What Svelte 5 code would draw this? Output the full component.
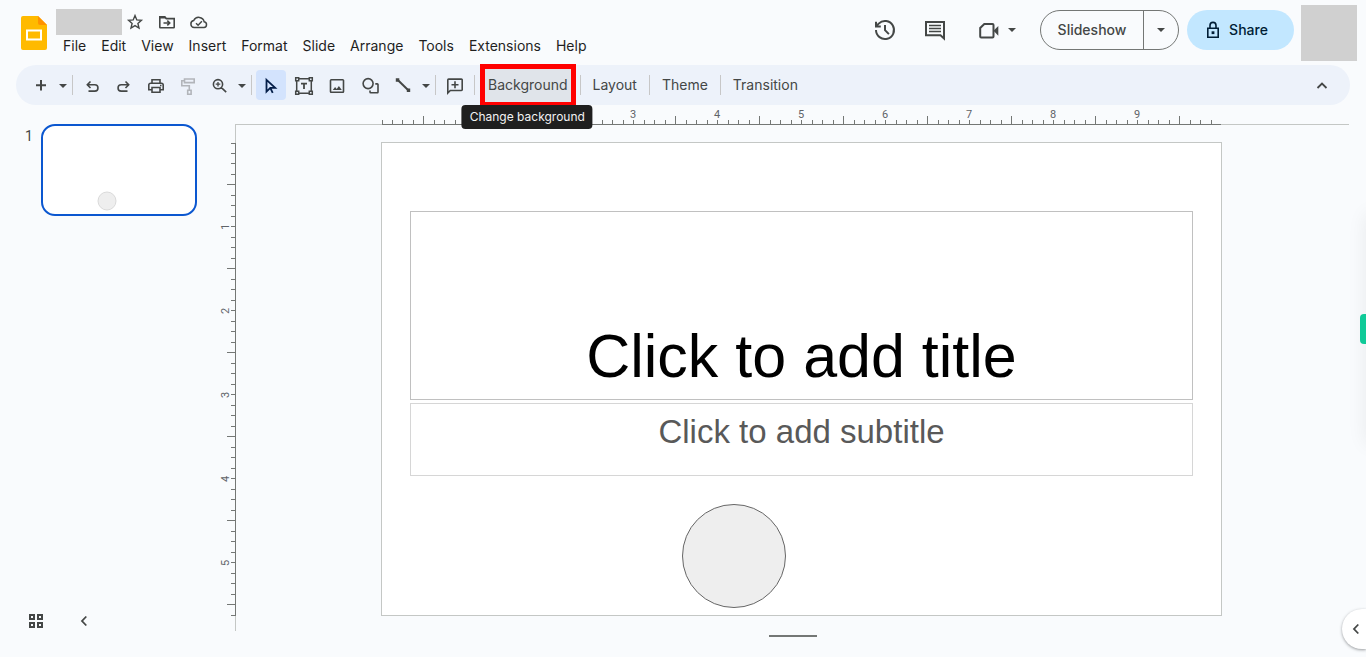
<script>
  const icons = {
    plus: [{ d: 'M10 5v10.500M5 10.300h10', w: 2 }],
    undo: [{ d: 'M8.500 6.500L5.300 9.800l3.200 3.200M5.500 9.800h7.300a3.100 3.100 0 0 1 0 6.300H6.500' }],
    redo: [{ d: 'M11.500 6.500l3.200 3.300-3.200 3.200M14.500 9.800H7.200a3.100 3.100 0 0 0 0 6.300h6.300' }],
    print: [
      { d: 'M6 8V4.800h8V8M5.500 14.800H2.800V10a1.800 1.800 0 0 1 1.800-1.800h10.800A1.800 1.800 0 0 1 17.200 10v4.800h-2.700M6 12.500h8v4.800H6z' },
      { d: 'M14 9.800h1.500v1.500H14z', fill: true }
    ],
    paint: [{ d: 'M6.500 4h9.700v3.600H6.500zM6.500 5.800H3.800v4.900h7.500V15M9.700 15.200h3.400v4H9.700z' }],
    zoom: [{ d: 'M12.600 9.200a4.600 4.600 0 1 1-9.200 0a4.600 4.600 0 1 1 9.200 0zM11.400 12.600l4.800 4.600' }, { d: 'M8 6.900v4.600M5.700 9.200h4.600', w: 1.3 }],
    cursor: [{ d: 'M5.500 4.800l8.700 8.100H9.300l-3.800 3.700zM9.300 12.900l2.400 5', w: 1.8 }],
    textbox: [
      { d: 'M5 3.700h10M5 18.300h10M2.700 6v10M17.300 6v10M1.700 2.700h3v3h-3zM15.300 2.700h3v3h-3zM1.700 16.300h3v3h-3zM15.300 16.300h3v3h-3z', w: 1.5 },
      { d: 'M7 8.600h6M10 8.600v5.400', w: 1.8 }
    ],
    image: [{ d: 'M4.300 4.800h11.400a.8.8 0 0 1 .8.800v10.900a.8.8 0 0 1-.8.800H4.300a.8.8 0 0 1-.8-.8V5.600a.8.8 0 0 1 .8-.8z' }, { d: 'M5.800 15l2.300-3 1.600 1.900 2.200-2.900 2.900 4z', fill: true }],
    shape: [{ d: 'M13.100 8.600a5 5 0 1 1-10 0a5 5 0 1 1 10 0zM15.300 8.900h2a.7.700 0 0 1 .7.700v7.500a.7.700 0 0 1-.7.700h-6.600a.7.700 0 0 1-.7-.7v-1.600' }],
    line: [{ d: 'M4.800 5L15.300 15.300', w: 2 }, { d: 'M2.800 3.300h3.500v3.400H2.800zM13.800 13.600h3.400V17h-3.400z', fill: true }],
    addComment: [{ d: 'M2.800 18V4.900a.8.8 0 0 1 .8-.8h12.800a.8.8 0 0 1 .8.800v9.800a.8.8 0 0 1-.8.800H5.300z' }, { d: 'M10 6.300v7M6.500 9.800h7' }],
    up: [{ d: 'M5.500 13l4.500-4.500 4.500 4.500', w: 1.8 }],
    left: [{ d: 'M12.300 5.500L8 10l4.300 4.500', w: 1.8 }],
    grid: [{ d: 'M4 4h4v4H4zM12 4h4v4h-4zM4 12h4v4H4zM12 12h4v4h-4z', w: 2 }],
    star: [{ d: 'M10 3.600l1.800 4.300 4.600.4-3.500 3.100 1.100 4.600L10 13.600 6 16l1.100-4.600-3.500-3.100 4.600-.4z', w: 1.4 }],
    folder: [{ d: 'M2.800 15.300V4.800h5l1.500 1.800h7.900v8.700a.5.500 0 0 1-.5.500H3.300a.5.500 0 0 1-.5-.5z' }, { d: 'M6.500 11h6M10.300 8.700l2.400 2.300-2.400 2.300' }, { d: 'M2.800 4.300h5l1.600 2.300H2.800z', fill: true }],
    cloud: [{ d: 'M5.200 15.600a3.600 3.600 0 0 1-.5-7.100a5.600 5.600 0 0 1 10.500 1.300a2.950 2.950 0 0 1-.2 5.800z', w: 1.5 }, { d: 'M7 11.200l2.100 2 3.800-3.900', w: 1.5 }],
    history: [{ d: 'M3 12a9 9 0 1 0 2.700-6.400L3 8.200M3 3.800v4.700h4.800M12 7v5.200l3.900 3.900', w: 2 }],
    comment: [{ d: 'M3 4h18v16.500L17.500 17.300H3z', w: 2 }, { d: 'M6 7.500h12M6 10.500h12M6 13.500h12', w: 1.7 }],
    camera: [{ d: 'M8.300 6h8.200a1 1 0 0 1 1 1v11.500a1 1 0 0 1-1 1H5.200a1 1 0 0 1-1-1v-8.500z', w: 2 }, { d: 'M17.500 12.800L22.300 8v9.800z', fill: true }],
    lock: [{ d: 'M4.800 8.300h10.400v8.900H4.800zM7 8V5.400a3 3 0 0 1 6 0V8' }, { d: 'M8.600 11.300h2.800v2.800H8.600z', fill: true }]
  };

  const menus = ['File', 'Edit', 'View', 'Insert', 'Format', 'Slide', 'Arrange', 'Tools', 'Extensions', 'Help'];
  const history = [['undo', 'Undo'], ['redo', 'Redo'], ['print', 'Print'], ['paint', 'Paint format'], ['zoom', 'Zoom']];
  const drawing = [['cursor', 'Select'], ['textbox', 'Text box'], ['image', 'Insert image'], ['shape', 'Shape'], ['line', 'Line']];

  const INCH = 84;
  const ticks = (length) =>
    Array.from({ length: Math.ceil(length / (INCH / 8)) }, (_, i) => ({
      at: Math.max(1, Math.round(i * (INCH / 8))),
      size: i % 8 === 4 ? 8 : 4
    }));
  const across = ticks(840);
  const down = ticks(474);
</script>

{#snippet icon(name, size = 20)}
  <svg width={size} height={size} viewBox="0 0 {size} {size}" aria-hidden="true">
    {#each icons[name] as p}
      {#if p.fill}
        <path d={p.d} fill="currentColor" />
      {:else}
        <path d={p.d} fill="none" stroke="currentColor" stroke-width={p.w ?? 1.6} />
      {/if}
    {/each}
  </svg>
{/snippet}

{#snippet caret(label)}
  <button class="caret" aria-label={label}>
    <svg width="12" height="20" viewBox="0 0 12 20" aria-hidden="true"><path d="M2 9h8l-4 4z" fill="currentColor" /></svg>
  </button>
{/snippet}

<div class="app">
  <header>
    <svg class="logo" width="26" height="34" viewBox="0 0 26 34" aria-label="Slides">
      <path d="M2 0h15l9 9v23a2 2 0 0 1-2 2H2a2 2 0 0 1-2-2V2a2 2 0 0 1 2-2z" fill="#ffba00" />
      <path d="M17 0l9 9h-7a2 2 0 0 1-2-2z" fill="#ff9200" />
      <path d="M6 14.500h14v9H6z" fill="none" stroke="#fff" stroke-width="2" />
    </svg>
    <div class="heading">
      <div class="doc">
        <span class="doc-name"></span>
        <button class="mini" aria-label="Star">{@render icon('star')}</button>
        <button class="mini" aria-label="Move">{@render icon('folder')}</button>
        <button class="mini" aria-label="Saved to Drive">{@render icon('cloud')}</button>
      </div>
      <nav>
        {#each menus as m}<button>{m}</button>{/each}
      </nav>
    </div>
    <div class="actions">
      <button class="round" aria-label="Version history">{@render icon('history', 24)}</button>
      <button class="round" aria-label="Comments">{@render icon('comment', 24)}</button>
      <div class="meet">
        <button class="round" aria-label="Video call">{@render icon('camera', 24)}</button>
        {@render caret('Call options')}
      </div>
      <div class="present">
        <button class="show">Slideshow</button>
        <button class="more" aria-label="Slideshow options">
          <svg width="12" height="20" viewBox="0 0 12 20" aria-hidden="true"><path d="M2 8h8l-4 4z" fill="currentColor" /></svg>
        </button>
      </div>
      <button class="share">{@render icon('lock')}Share</button>
      <span class="avatar"></span>
    </div>
  </header>

  <div class="toolbar" role="toolbar" aria-label="Main">
    <button class="tool" aria-label="New slide">{@render icon('plus')}</button>
    {@render caret('New slide with layout')}
    <i class="sep"></i>
    {#each history as [name, label]}
      <button class="tool" class:off={name === 'paint'} aria-label={label}>{@render icon(name)}</button>
    {/each}
    {@render caret('Zoom options')}
    <i class="sep"></i>
    <div class="group">
      {#each drawing as [name, label]}
        <button class="tool" class:on={name === 'cursor'} aria-label={label}>{@render icon(name)}</button>
      {/each}
      {@render caret('Line options')}
    </div>
    <i class="sep"></i>
    <button class="tool" aria-label="Add comment">{@render icon('addComment')}</button>
    <i class="sep"></i>
    <div class="marked">
      <button class="text hover">Background</button>
      <span class="frame"></span>
      <span class="tip" role="tooltip">Change background</span>
    </div>
    <i class="sep"></i>
    <button class="text">Layout</button>
    <i class="sep"></i>
    <button class="text">Theme</button>
    <i class="sep"></i>
    <button class="text">Transition</button>
    <button class="tool collapse" aria-label="Hide the menus">{@render icon('up')}</button>
  </div>

  <main>
    <aside>
      <div class="film">
        <span class="num">1</span>
        <button class="thumb" aria-label="Slide 1">
          <svg viewBox="0 0 152 88" aria-hidden="true"><circle cx="64" cy="75" r="9" fill="#eee" stroke="#dadada" /></svg>
        </button>
      </div>
      <div class="views">
        <button class="tool" aria-label="Grid view">{@render icon('grid')}</button>
        <button class="tool" aria-label="Hide filmstrip">{@render icon('left')}</button>
      </div>
    </aside>

    <div class="vruler">
      <svg width="20" height="474" viewBox="0 0 20 474" aria-hidden="true">
        {#each down as t}
          <rect x={19 - t.size} y={t.at} width={t.size} height="1" />
        {/each}
        <rect x="19" y="1" width="1" height="473" />
        {#each [1, 2, 3, 4, 5] as n}
          <text transform="translate(13 {n * INCH + 1}) rotate(-90)">{n}</text>
        {/each}
      </svg>
    </div>

    <section class="work">
      <div class="hruler">
        <svg viewBox="0 0 841 20" aria-hidden="true">
          {#each across as t}
            <rect x={t.at} y={19 - t.size} width="1" height={t.size} />
          {/each}
          <rect x="1" y="19" width="839" height="1" />
          {#each [3, 4, 5, 6, 7, 8, 9] as n}
            <text x={n * INCH} y="13">{n}</text>
          {/each}
        </svg>
      </div>
      <div class="stage">
        <article class="slide">
          <div class="box title"><h1>Click to add title</h1></div>
          <div class="box subtitle"><p>Click to add subtitle</p></div>
          <svg class="disc" viewBox="0 0 104 104" aria-hidden="true">
            <circle cx="52" cy="52" r="51.500" fill="#eee" stroke="#666" />
          </svg>
        </article>
      </div>
      <span class="grip"></span>
    </section>
  </main>

  <span class="edge"></span>
  <span class="tab"></span>
  <button class="panel" aria-label="Show side panel">{@render icon('left')}</button>
</div>

<style>
  :global(body) {
    margin: 0;
    background: #f9fbfd;
  }
  .app {
    position: relative;
    display: flex;
    flex-direction: column;
    min-height: 100vh;
    overflow: hidden;
    background: #f9fbfd;
    color: #444746;
    font: 14px/20px Inter, Roboto, sans-serif;
  }
  button {
    display: flex;
    align-items: center;
    justify-content: center;
    flex: none;
    margin: 0;
    padding: 0;
    border: 0;
    background: none;
    color: inherit;
    font: inherit;
  }
  svg {
    display: block;
    flex: none;
  }
  header {
    display: flex;
    align-items: flex-start;
    height: 65px;
  }
  .logo {
    margin: 16px 8px 0 21px;
  }
  .heading {
    padding-top: 9px;
  }
  .doc {
    display: flex;
    align-items: center;
    height: 26px;
  }
  .doc-name {
    width: 66px;
    height: 26px;
    margin-left: 1px;
    margin-right: -3px;
    background: #d0d0d0;
  }
  .mini {
    width: 32px;
    height: 26px;
  }
  nav {
    display: flex;
    color: #1f1f1f;
  }
  nav button {
    height: 22px;
    padding: 0 7px 0 8px;
  }
  .actions {
    display: flex;
    margin-left: auto;
    padding-right: 9px;
  }
  .round {
    width: 40px;
    height: 40px;
    margin: 10px 5px 0;
  }
  .meet {
    display: flex;
    margin-right: 22px;
  }
  .meet .round {
    margin: 10px -2px 0 8px;
  }
  .caret {
    width: 12px;
    height: 30px;
  }
  .meet .caret {
    margin-top: 14px;
  }
  .present {
    display: flex;
    box-sizing: border-box;
    height: 40px;
    margin: 10px 8px 0 0;
    border: 1px solid #747775;
    border-radius: 20px;
    font-weight: 500;
  }
  .show {
    width: 103px;
    border-right: 1px solid #747775;
  }
  .more {
    width: 34px;
  }
  .share {
    gap: 6px;
    width: 107px;
    height: 40px;
    margin: 10px 7px 0 0;
    padding-right: 10px;
    border-radius: 20px;
    background: #c2e7ff;
    color: #001d35;
    font-weight: 500;
  }
  .avatar {
    width: 56px;
    height: 56px;
    margin-top: 5px;
    background: #d0d0d0;
  }
  .toolbar {
    display: flex;
    align-items: center;
    height: 40px;
    margin: 0 16px;
    padding: 0 12px 0 9px;
    border-radius: 20px;
    background: #edf2fa;
  }
  .tool {
    width: 30px;
    height: 30px;
    margin: 0 1px;
    border-radius: 4px;
  }
  .tool.off {
    color: #b2b5ba;
  }
  .tool.on {
    background: #d3e3fd;
    color: #041e49;
  }
  .tool.collapse {
    margin-left: auto;
  }
  .group {
    display: flex;
    gap: 1px;
  }
  .sep {
    flex: none;
    width: 1px;
    height: 20px;
    margin: 0 3px;
    background: #c7c7c7;
  }
  .text {
    height: 30px;
    padding: 0 9px;
  }
  .text.hover {
    height: 34px;
    margin: 0 1px 0 2px;
    padding: 0 8px;
    background: #e0e4ea;
  }
  .marked {
    position: relative;
  }
  .frame {
    position: absolute;
    inset: -4px 1px -5px 2px;
    border: 5px solid #f00;
  }
  .tip {
    position: absolute;
    top: 37px;
    left: 50%;
    z-index: 2;
    padding: 2px 8px;
    border-radius: 4px;
    background: #1f1f1f;
    color: #f2f2f2;
    font-size: 12px;
    white-space: nowrap;
    transform: translateX(-50%);
  }
  main {
    display: flex;
    flex: 1;
    padding-right: 17px;
  }
  aside {
    display: flex;
    flex-direction: column;
    justify-content: space-between;
    width: 216px;
    flex: none;
  }
  .film {
    display: flex;
    padding: 19px 19px 0 25px;
  }
  .num {
    width: 16px;
    padding-top: 2px;
    font-family: Roboto, sans-serif;
  }
  .thumb {
    flex: 1;
    border: 2px solid #0b57d0;
    border-radius: 14px;
    background: #fff;
  }
  .thumb svg {
    width: 100%;
  }
  .views {
    display: flex;
    gap: 16px;
    padding: 0 20px 21px;
  }
  .vruler {
    margin: 19px 0 26px;
    padding-top: 18px;
    background: linear-gradient(#c4c7c5, #c4c7c5) right / 1px 100% no-repeat;
  }
  .vruler svg,
  .hruler svg {
    fill: #747775;
    shape-rendering: crispEdges;
  }
  text {
    fill: #5f6368;
    font: 11px Roboto, sans-serif;
    text-anchor: middle;
  }
  .work {
    display: flex;
    flex: 1;
    flex-direction: column;
    min-width: 0;
  }
  .hruler,
  .stage {
    display: flex;
    justify-content: center;
    padding-left: 18px;
  }
  .hruler {
    background: linear-gradient(#c4c7c5, #c4c7c5) bottom / 100% 1px no-repeat;
  }
  .hruler svg {
    width: 100%;
    max-width: 841px;
  }
  .stage {
    flex: 1;
    align-items: flex-start;
    padding-top: 17px;
  }
  .slide {
    position: relative;
    box-sizing: border-box;
    width: 100%;
    max-width: 841px;
    min-height: 474px;
    padding: 68px 28px;
    border: 1px solid #c4c7c5;
    background: #fff;
    font-family: "Liberation Sans", Arial, sans-serif;
    text-align: center;
  }
  .box {
    display: flex;
    box-sizing: border-box;
    justify-content: center;
    border: 1px solid #c0c0c0;
  }
  .title {
    align-items: flex-end;
    min-height: 189px;
    padding-bottom: 8px;
  }
  .subtitle {
    min-height: 73px;
    margin-top: 3px;
    padding-top: 9px;
    border-color: #d6d6d6;
  }
  h1,
  p {
    margin: 0;
    font-weight: 400;
  }
  h1 {
    color: #000;
    font-size: 61px;
    line-height: 70px;
  }
  p {
    color: #595959;
    font-size: 33px;
    line-height: 38px;
  }
  .disc {
    position: absolute;
    top: 361px;
    left: 300px;
    width: 104px;
    height: 104px;
  }
  .grip {
    align-self: center;
    width: 48px;
    height: 2px;
    margin-bottom: 20px;
    background: #747775;
  }
  .edge {
    position: absolute;
    top: 214px;
    left: 100%;
    width: 20px;
    height: 230px;
    box-shadow: 0 0 20px rgba(0, 0, 0, 0.07);
  }
  .tab {
    position: absolute;
    top: 314px;
    right: 0;
    width: 6px;
    height: 30px;
    border-radius: 4px 0 0 4px;
    background: #0fca98;
  }
  .panel {
    position: absolute;
    right: 0;
    bottom: 8px;
    width: 24px;
    height: 40px;
    padding-left: 4px;
    border-radius: 20px 0 0 20px;
    background: #fff;
    box-shadow: 0 1px 3px rgba(60, 64, 67, 0.5);
  }
</style>
